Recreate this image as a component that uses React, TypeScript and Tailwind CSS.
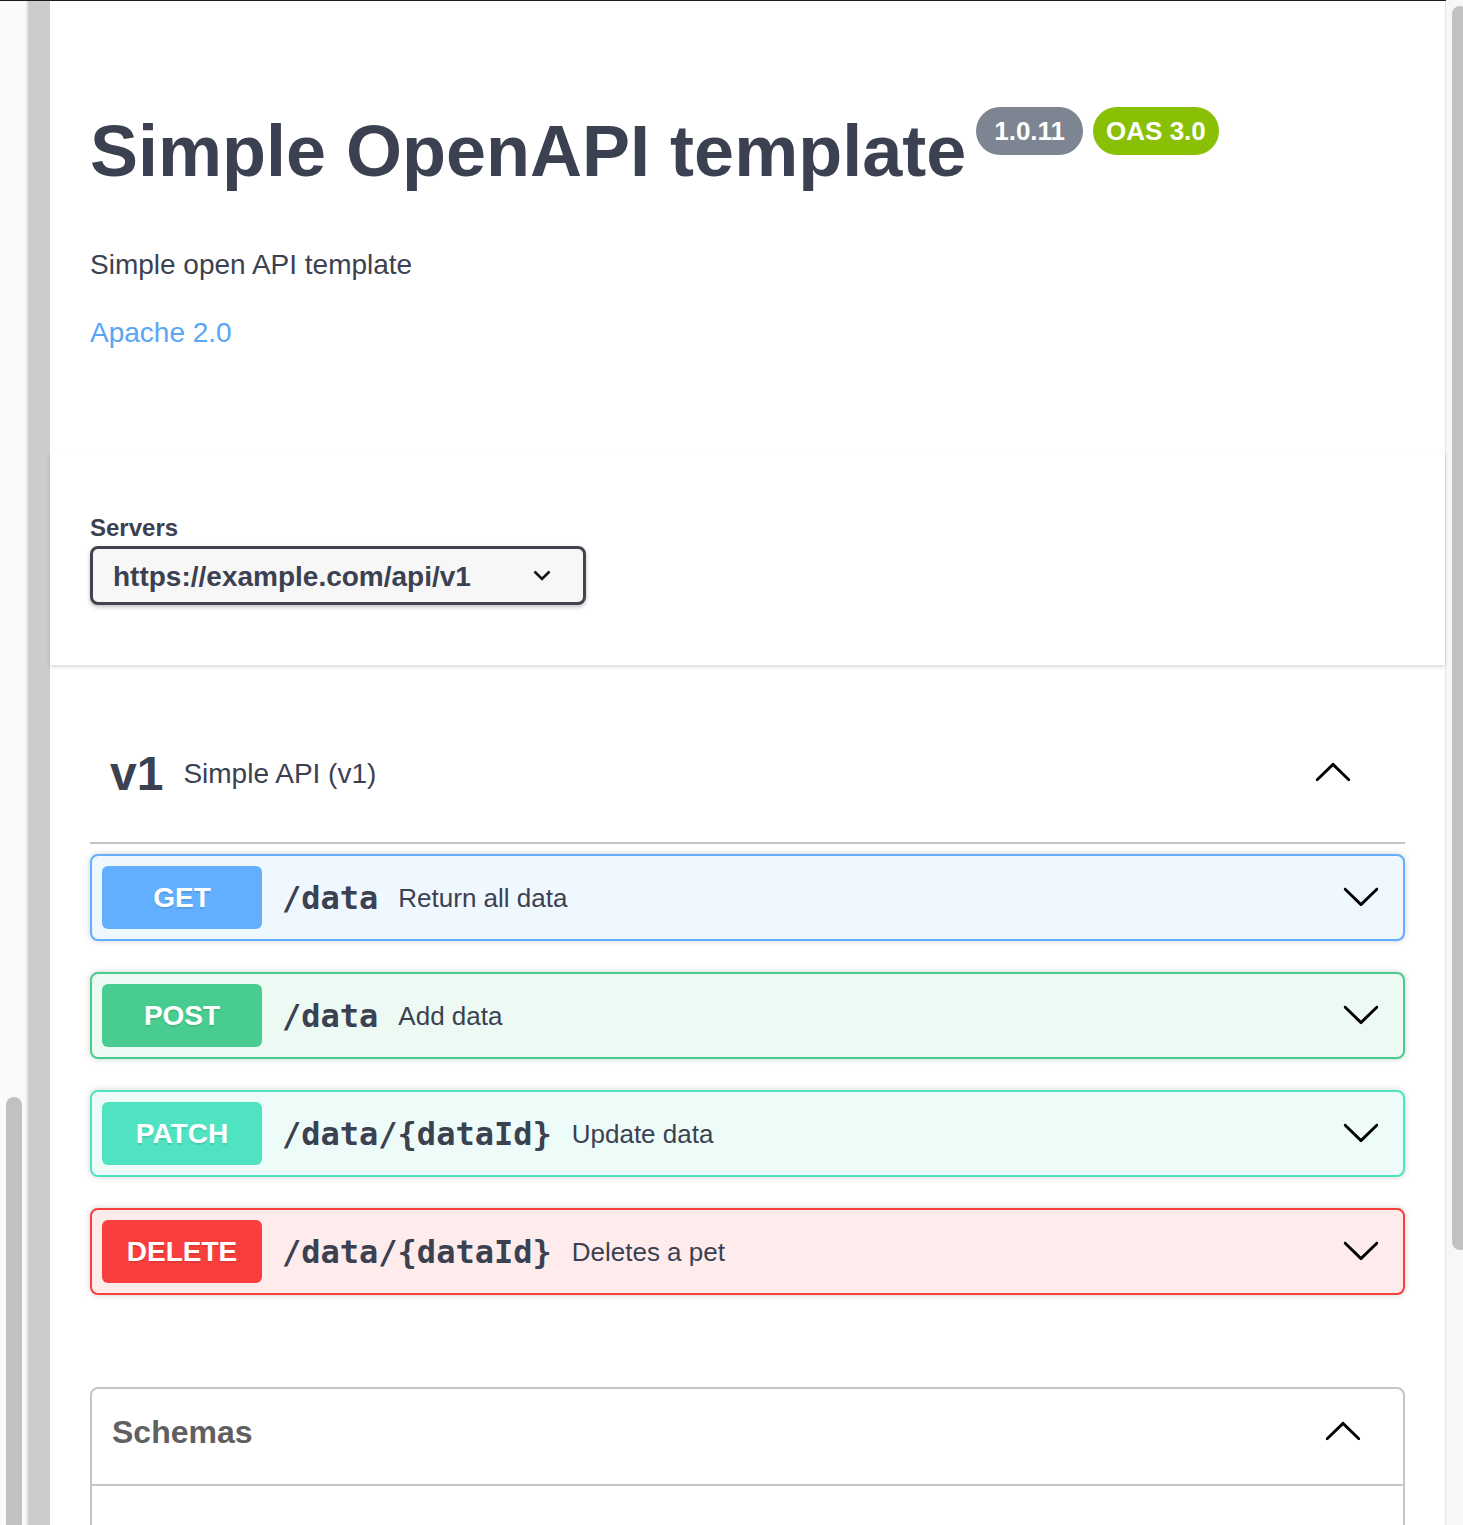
import React from 'react';
import clsx from 'clsx';

const ARROW =
  'M17.418 6.109c.272-.268.709-.268.979 0s.271.701 0 .969l-7.908 7.83c-.27.268-.707.268-.979 0l-7.908-7.83c-.27-.268-.27-.701 0-.969.271-.268.709-.268.979 0L10 13.25l7.418-7.141z';

function Arrow({ up, className }: { up?: boolean; className?: string }) {
  return (
    <svg viewBox="0 0 20 20" width="40" height="40" className={clsx('shrink-0', up && 'rotate-180', className)}>
      <path fill="#000" d={ARROW} />
    </svg>
  );
}

const ops = [
  { method: 'GET', path: '/data', summary: 'Return all data', badge: 'bg-[#61affe]', box: 'border-[#61affe] bg-[#eff7ff]' },
  { method: 'POST', path: '/data', summary: 'Add data', badge: 'bg-[#49cc90]', box: 'border-[#49cc90] bg-[#edfaf4]' },
  { method: 'PATCH', path: '/data/{dataId}', summary: 'Update data', badge: 'bg-[#50e3c2]', box: 'border-[#50e3c2] bg-[#eefcf9]' },
  { method: 'DELETE', path: '/data/{dataId}', summary: 'Deletes a pet', badge: 'bg-[#f93e3e]', box: 'border-[#f93e3e] bg-[#feecec]' },
];

export default function App() {
  return (
    <div className="flex h-[1525px] w-[1463px] overflow-hidden bg-white font-['Liberation_Sans',Arial,sans-serif] text-[#3b4151]">
      <div className="flex flex-1 border-t border-[#1b1b1b]">
        {/* left window chrome */}
        <div className="flex w-[50px] shrink-0">
          <div className="w-[26px] bg-[#fafafa] pl-[6px] pt-[1096px]">
            <div className="h-[440px] w-[16px] rounded-full bg-[#c1c1c1]" />
          </div>
          <div className="w-[2px] bg-[#e8e8e8]" />
          <div className="w-[22px] bg-[#cccccc]" />
        </div>

        <main className="flex-1 border-r border-[#e8e8e8] bg-white">
          {/* info */}
          <section className="px-[40px] pt-[106px] pb-[103px]">
            <div className="flex items-start">
              <h2 className="mt-[4px] text-[72px] font-bold leading-[80px] text-[#3b4151]">Simple OpenAPI template</h2>
              <div className="ml-[10px] flex gap-[10px]">
                <span className="flex h-[48px] items-center rounded-full bg-[#7d8492] px-[18px] text-[26px] font-bold leading-[30px] text-white">
                  1.0.11
                </span>
                <span className="flex h-[48px] items-center rounded-full bg-[#89bf04] px-[13px] text-[26px] font-bold leading-[30px] text-white">
                  OAS 3.0
                </span>
              </div>
            </div>
            <p className="mt-[58px] text-[28px] leading-[32px]">Simple open API template</p>
            <a className="mt-[36px] block w-fit text-[28px] leading-[32px] text-[#58a6f5]">Apache 2.0</a>
          </section>

          {/* servers */}
          <section className="relative px-[40px] pt-[62px] pb-[60px] shadow-[0_2px_4px_0_rgba(0,0,0,0.15)]">
            <div className="text-[24px] font-bold leading-[28px]">Servers</div>
            <div className="mt-[4px] flex h-[59px] w-[496px] items-center justify-between rounded-[8px] border-[3px] border-[#41444e] bg-[#f7f7f7] pl-[20px] pr-[32px] shadow-[0_2px_4px_0_rgba(0,0,0,0.25)]">
              <span className="mt-[2px] text-[28px] font-bold leading-[32px]">https://example.com/api/v1</span>
              <svg width="18" height="11" viewBox="0 0 18 11">
                <polyline points="1.5,1.5 9,9 16.5,1.5" fill="none" stroke="#111" strokeWidth="2.6" />
              </svg>
            </div>
          </section>

          {/* tag */}
          <section className="px-[40px] pt-[40px]">
            <h3 className="flex h-[139px] items-center border-b-2 border-[#c4c6cb] pl-[20px]">
              <span className="text-[48px] font-bold leading-[56px]">v1</span>
              <span className="ml-[20px] text-[28px] leading-[32px]">Simple API (v1)</span>
              <span className="flex-1" />
              <Arrow up className="mb-[2px] mr-[52px]" />
            </h3>

            <div className="mt-[10px] flex flex-col gap-[31px]">
              {ops.map((op) => (
                <div
                  key={op.method}
                  className={clsx(
                    'flex items-center rounded-[8px] border-2 p-[10px] shadow-[0_0_6px_rgba(0,0,0,0.19)]',
                    op.box,
                  )}
                >
                  <span
                    className={clsx(
                      'flex h-[63px] w-[160px] items-center justify-center rounded-[6px] text-[28px] font-bold text-white [text-shadow:0_2px_0_rgba(0,0,0,0.1)]',
                      op.badge,
                    )}
                  >
                    {op.method}
                  </span>
                  <span className="px-[20px] font-['DejaVu_Sans_Mono',monospace] text-[32px] font-bold leading-[40px]">
                    {op.path}
                  </span>
                  <span className="text-[26px] leading-[30px]">{op.summary}</span>
                  <span className="flex-1" />
                  <Arrow className="mb-[4px] mr-[12px]" />
                </div>
              ))}
            </div>

            {/* schemas */}
            <div className="mt-[92px] rounded-[8px] border-2 border-[#c4c6cb]">
              <h4 className="flex h-[97px] items-center border-b-2 border-[#c4c6cb] pb-[10px] pl-[20px] pr-[40px] text-[32px] font-bold text-[#606060]">
                <span className="flex-1">Schemas</span>
                <Arrow up />
              </h4>
              <div className="h-[200px]" />
            </div>
          </section>
        </main>
      </div>

      {/* right scrollbar */}
      <div className="w-[17px] shrink-0 overflow-hidden bg-[#f7f7f7] pl-[6px] pt-[6px]">
        <div className="h-[1244px] w-[16px] rounded-full bg-[#c1c1c1]" />
      </div>
    </div>
  );
}
